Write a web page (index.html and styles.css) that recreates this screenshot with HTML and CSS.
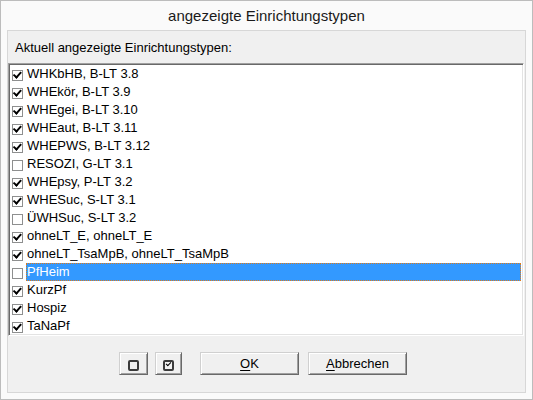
FILE: index.html
```html
<!DOCTYPE html>
<html lang="de">
<head>
<meta charset="utf-8">
<link rel="stylesheet" href="styles.css">
</head>
<body>
<div class="window">
  <div class="title">angezeigte Einrichtungstypen</div>
  <div class="panel">
    <div class="label">Aktuell angezeigte Einrichtungstypen:</div>
    <div class="list">
      <div class="item"><span class="cb on"></span><span class="txt">WHKbHB, B-LT 3.8</span></div>
      <div class="item"><span class="cb on"></span><span class="txt">WHEkör, B-LT 3.9</span></div>
      <div class="item"><span class="cb on"></span><span class="txt">WHEgei, B-LT 3.10</span></div>
      <div class="item"><span class="cb on"></span><span class="txt">WHEaut, B-LT 3.11</span></div>
      <div class="item"><span class="cb on"></span><span class="txt">WHEPWS, B-LT 3.12</span></div>
      <div class="item"><span class="cb"></span><span class="txt">RESOZI, G-LT 3.1</span></div>
      <div class="item"><span class="cb on"></span><span class="txt">WHEpsy, P-LT 3.2</span></div>
      <div class="item"><span class="cb on"></span><span class="txt">WHESuc, S-LT 3.1</span></div>
      <div class="item"><span class="cb"></span><span class="txt">ÜWHSuc, S-LT 3.2</span></div>
      <div class="item"><span class="cb on"></span><span class="txt">ohneLT_E, ohneLT_E</span></div>
      <div class="item"><span class="cb on"></span><span class="txt">ohneLT_TsaMpB, ohneLT_TsaMpB</span></div>
      <div class="item selected"><span class="cb"></span><span class="txt">PfHeim</span></div>
      <div class="item"><span class="cb on"></span><span class="txt">KurzPf</span></div>
      <div class="item"><span class="cb on"></span><span class="txt">Hospiz</span></div>
      <div class="item"><span class="cb on"></span><span class="txt">TaNaPf</span></div>
    </div>
    <div class="buttons">
      <button class="btn small"><span class="ico"></span></button>
      <button class="btn small second"><span class="ico checked"></span></button>
      <button class="btn wide ok"><u>O</u>K</button>
      <button class="btn wide cancel"><u>A</u>bbrechen</button>
    </div>
  </div>
</div>
</body>
</html>
```
FILE: styles.css
```css
html, body {
  margin: 0;
  padding: 0;
}
body {
  width: 533px;
  height: 400px;
  font-family: "Liberation Sans", Arial, sans-serif;
  color: #000;
}
.window {
  width: 533px;
  height: 400px;
  box-sizing: border-box;
  border: 1px solid #bcbcbc;
  background: #fafafa;
  display: flex;
  flex-direction: column;
}
.title {
  height: 29px;
  line-height: 30px;
  text-align: center;
  font-size: 15px;
  color: #1a1a1a;
}
.panel {
  margin: 0 6px 0 6px;
  height: 363px;
  box-sizing: border-box;
  border: 1px solid #d7d7d7;
  background: #f0f0f0;
  display: flex;
  flex-direction: column;
}
.label {
  height: 32px;
  line-height: 33px;
  padding-left: 7px;
  font-size: 13px;
}
.list {
  margin-right: 1px;
  height: 273px;
  box-sizing: border-box;
  background: #fff;
  border: 1px solid;
  border-color: #a0a0a0 #ffffff #ffffff #a0a0a0;
  box-shadow: inset 1px 1px 0 #696969, inset -1px -1px 0 #e3e3e3;
  padding: 1px 2px 0 1px;
}
.item {
  height: 18px;
  display: flex;
  align-items: center;
  font-size: 13px;
}
.cb {
  width: 11px;
  height: 11px;
  box-sizing: border-box;
  border: 1px solid #8e8f8f;
  background: #fff;
  margin-left: 2px;
  margin-right: 3px;
  flex: none;
  position: relative;
  top: 1px;
}
.cb.on::after {
  content: "";
  position: absolute;
  left: 1px;
  top: 0px;
  width: 6px;
  height: 3px;
  border-left: 2px solid #000;
  border-bottom: 2px solid #000;
  transform: translate(0, 1px) rotate(-48deg);
  transform-origin: 40% 60%;
}
.txt {
  flex: 1;
  height: 18px;
  line-height: 18px;
  padding-left: 1px;
  box-sizing: border-box;
  white-space: nowrap;
}
.item.selected .txt {
  background: #3399ff;
  color: #fff;
  outline: 1px dotted #e07a18;
  outline-offset: -1px;
}
.buttons {
  flex: 1;
  display: flex;
  align-items: center;
  padding-left: 111px;
  padding-bottom: 2px;
}
.btn {
  height: 23px;
  box-sizing: border-box;
  background: #f0f0f0;
  border: 1px solid;
  border-color: #d0d0d0 #696969 #696969 #d0d0d0;
  box-shadow: inset 1px 1px 0 #ffffff, inset -1px -1px 0 #a0a0a0;
  font-family: "Liberation Sans", Arial, sans-serif;
  font-size: 13px;
  color: #000;
  padding: 0;
  display: flex;
  align-items: center;
  justify-content: center;
}
.btn.small {
  width: 29px;
}
.btn.small.second {
  width: 27px;
  margin-left: 7px;
}
.btn.wide {
  width: 99px;
}
.btn.ok {
  margin-left: 18px;
}
.btn.cancel {
  margin-left: 9px;
}
.ico {
  width: 11px;
  height: 11px;
  box-sizing: border-box;
  border: 2px solid #3a3a3a;
  border-radius: 2px;
  position: relative;
  top: 2px;
}
.ico.checked::after {
  content: "";
  position: absolute;
  left: 1px;
  top: 0px;
  width: 4px;
  height: 2px;
  border-left: 1.5px solid #000;
  border-bottom: 1.5px solid #000;
  transform: rotate(-45deg);
}
u {
  text-decoration: underline;
  text-underline-offset: 2px;
}
```
